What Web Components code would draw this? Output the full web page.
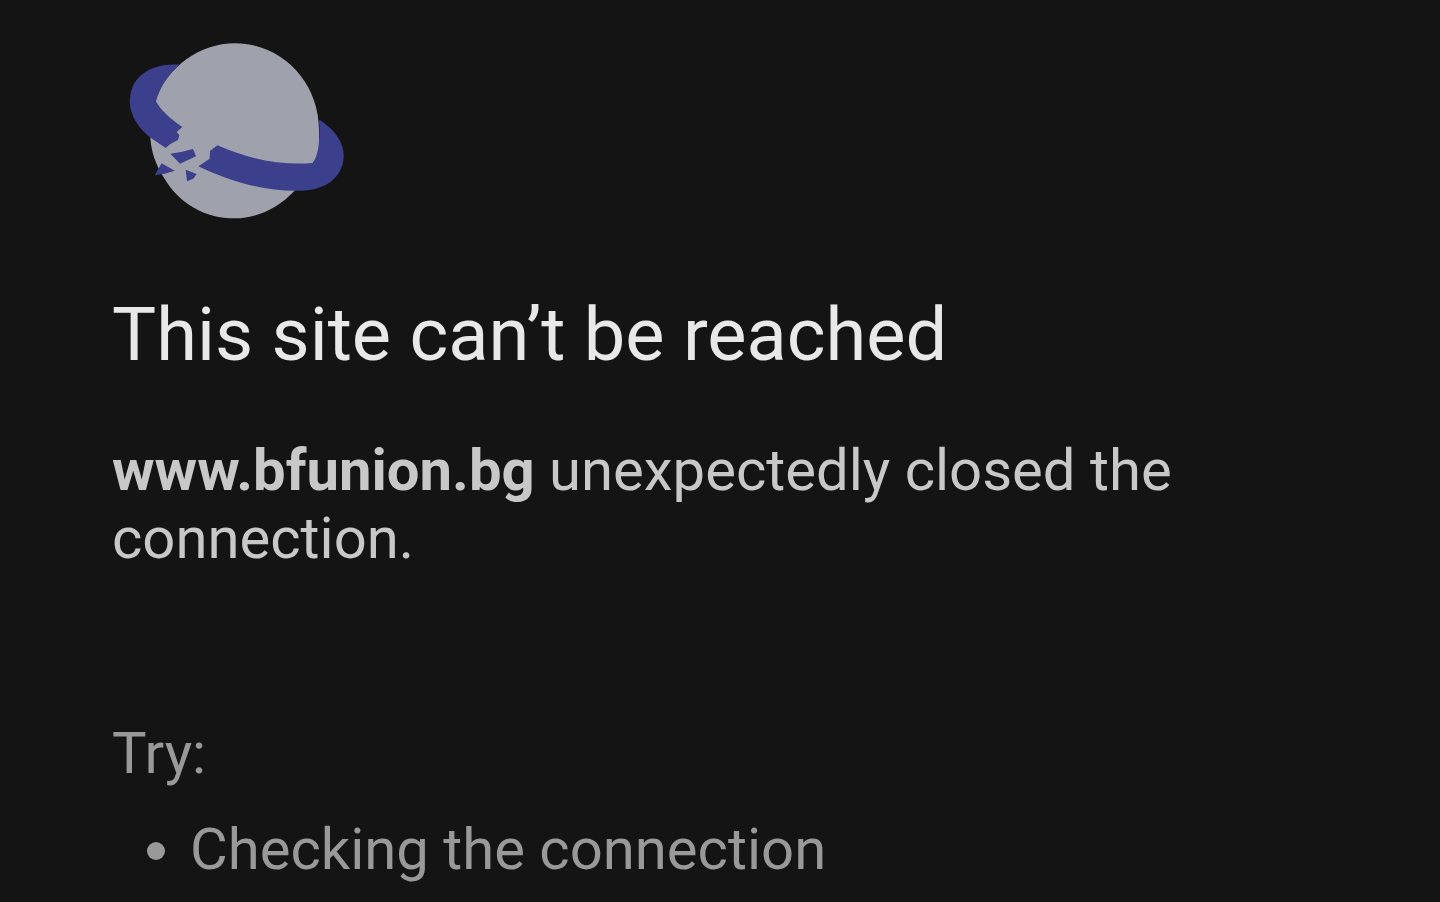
<!DOCTYPE html>
<html lang="en">
<head>
<meta charset="utf-8">
<meta name="viewport" content="width=device-width, initial-scale=1">
<title>This site can’t be reached</title>
<style>
  body { margin: 0; background: #141414; font-family: Roboto, "Liberation Sans", sans-serif; }
</style>
</head>
<body>
<error-page>
  <broken-planet slot="icon"></broken-planet>
  <span slot="title">This site can’t be reached</span>
  <error-summary host="www.bfunion.bg">unexpectedly closed the connection.</error-summary>
  <suggestion-list label="Try:">
    <li>Checking the connection</li>
  </suggestion-list>
</error-page>

<template id="error-page">
  <style>
    :host { display: block; }
    main { padding: 35px 112px 16px; }
    h1 { margin: 66px 0 57px; font-size: 74px; line-height: 88px; font-weight: 400; color: #e8e8e8; }
  </style>
  <main>
    <slot name="icon"></slot>
    <h1><slot name="title"></slot></h1>
    <slot></slot>
  </main>
</template>

<template id="broken-planet">
  <style>
    :host { display: block; padding-left: 8px; }
    svg { display: block; width: 235px; height: 190px; }
  </style>
  <svg viewBox="0 0 705 570" aria-hidden="true">
    <path fill="#9fa2ad" d="M345 25C487 25 597 142 597 285L600 400L523 468C475 519 412 550 345 550C255 550 177 506 132 428C108 391 93 350 91 306L105 195C143 97 238 25 345 25Z"/>
    <g fill="#3b3f8c">
      <path d="M179 89C138 86 98 94 69 116C38 138 27 174 30 213C38 257 65 288 93 309L137 339L151 327L174 315L178 300L170 291L187 276C153 253 123 228 108 199C121 153 146 117 179 89Z"/>
      <path d="M601 256C649 288 674 328 671 369C666 427 619 464 548 467C440 472 331 440 235 394L269 371L270 348L292 331C376 369 480 392 577 384C593 367 602 322 597 256Z"/>
      <path d="M151 356L187 350L219 342L228 364L180 386Z"/>
      <path d="M125 385L164 407L134 416L104 421Z"/>
      <path d="M197 404L230 417L220 431L201 439Z"/>
    </g>
  </svg>
</template>

<template id="error-summary">
  <style>
    :host { display: block; }
    p { margin: 0; font-size: 58px; line-height: 68px; color: #c8c8c8; }
    strong { font-weight: 700; }
  </style>
  <p><strong></strong> <slot></slot></p>
</template>

<template id="suggestion-list">
  <style>
    :host { display: block; margin-top: 147px; font-size: 58px; line-height: 68px; color: #999; }
    p { margin: 0 0 28px; }
    ul { margin: 0; padding-left: 78px; list-style: disc; }
  </style>
  <p id="label"></p>
  <ul aria-labelledby="label"><slot></slot></ul>
</template>

<script>
  class TemplateElement extends HTMLElement {
    constructor() {
      super();
      const template = document.getElementById(this.localName);
      this.attachShadow({ mode: "open" }).append(template.content.cloneNode(true));
    }
  }
  customElements.define("error-page", class extends TemplateElement {});
  customElements.define("broken-planet", class extends TemplateElement {});
  customElements.define("error-summary", class extends TemplateElement {
    connectedCallback() {
      this.shadowRoot.querySelector("strong").textContent = this.getAttribute("host");
    }
  });
  customElements.define("suggestion-list", class extends TemplateElement {
    connectedCallback() {
      this.shadowRoot.querySelector("#label").textContent = this.getAttribute("label");
    }
  });
</script>
</body>
</html>
